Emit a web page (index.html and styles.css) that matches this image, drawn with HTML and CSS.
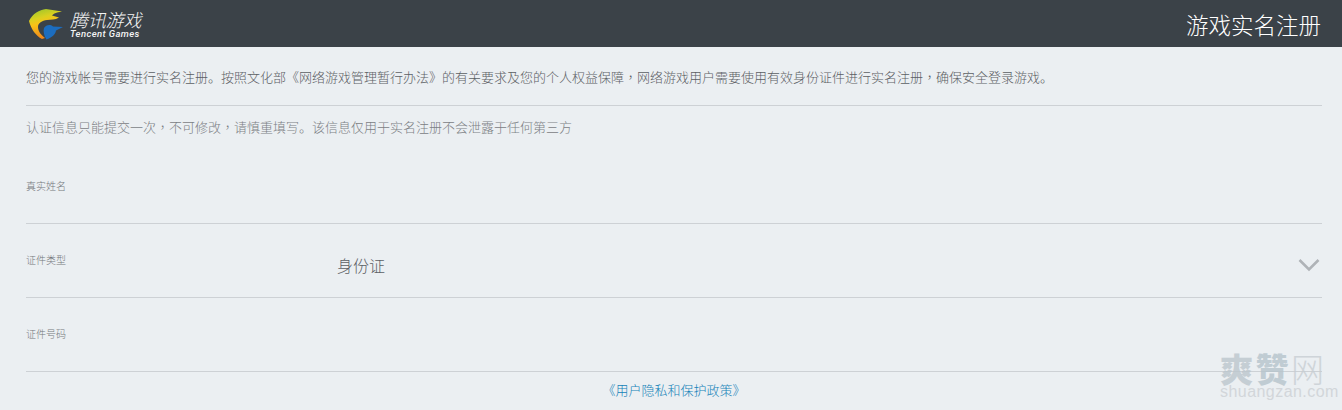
FILE: index.html
```html
<!DOCTYPE html>
<html lang="zh-CN">
<head>
<meta charset="utf-8">
<title>游戏实名注册</title>
<link rel="stylesheet" href="styles.css">
</head>
<body>
<header class="topbar">
  <div class="brand">
    <svg class="brand-mark" width="36" height="34" viewBox="28 8 36 34" aria-hidden="true">
      <defs>
        <linearGradient id="swoosh" x1="0.2" y1="0" x2="0.5" y2="1">
          <stop offset="0" stop-color="#9cc52c"/>
          <stop offset=".3" stop-color="#d9d020"/>
          <stop offset=".48" stop-color="#f8c218"/>
          <stop offset="1" stop-color="#ee7f1c"/>
        </linearGradient>
      </defs>
      <path d="M29 22 C33 14 39 11 46 10 L62 12.5 C56 13.5 53 15 52 16.5 L59 18.5 C55 21 51 20.5 47 21 C42 21.5 38 24 38 28 C38 32 41 36 45 39 L42 40 C36 37 31 30 29 22Z" fill="url(#swoosh)"/>
      <path d="M44 29 C46 26 50 25 53 27.5 L63 28 L56 31.5 C55.5 35.5 52 38.5 46.5 40.5 C44 37 43 32 44 29Z" fill="#1c6dbf"/>
    </svg>
    <div class="brand-text">
      <span class="brand-cn">腾讯游戏</span>
      <span class="brand-en">Tencent Games</span>
    </div>
  </div>
  <h1 class="page-title">游戏实名注册</h1>
</header>
<main class="content">
  <p class="intro">您的游戏帐号需要进行实名注册。按照文化部《网络游戏管理暂行办法》的有关要求及您的个人权益保障<span class="comma" lang="zh-TW">，</span>网络游戏用户需要使用有效身份证件进行实名注册<span class="comma" lang="zh-TW">，</span>确保安全登录游戏。</p>
  <p class="notice">认证信息只能提交一次<span class="comma" lang="zh-TW">，</span>不可修改<span class="comma" lang="zh-TW">，</span>请慎重填写。该信息仅用于实名注册不会泄露于任何第三方</p>
  <form class="form">
    <div class="field field-first"><span class="field-label">真实姓名</span></div>
    <div class="field"><span class="field-label">证件类型</span><span class="field-value">身份证</span>
      <svg class="chevron" width="22" height="14" viewBox="0 0 22 14" aria-hidden="true"><path d="M1.5 2 L11 11.5 L20.5 2" fill="none" stroke="#afb3b7" stroke-width="2.6"/></svg>
    </div>
    <div class="field"><span class="field-label">证件号码</span></div>
  </form>
  <a class="policy" href="#">《用户隐私和保护政策》</a>
</main>
<div class="watermark">
  <div class="wm-cn"><span class="wm-a">爽</span><span class="wm-b">赞</span><span class="wm-c">网</span></div>
  <div class="wm-en">shuangzan.com</div>
</div>
</body>
</html>
```
FILE: styles.css
```css
* { box-sizing: border-box; }
html, body { margin: 0; height: 410px; overflow: hidden; }
body {
  position: relative;
  background: #ebeff2;
  font-family: "Noto Sans CJK SC", "Liberation Sans", sans-serif;
  color: #5c6064;
}
.topbar {
  height: 47px;
  background: #3b4248;
  display: flex;
  align-items: center;
  justify-content: space-between;
  padding: 0 21px 0 28px;
}
.brand { display: flex; align-items: center; gap: 6px; }
.brand-mark { display: block; }
.brand-text { display: flex; flex-direction: column; color: #f4f4f4; font-style: italic; }
.brand-cn { font-size: 18px; line-height: 20px; letter-spacing: -.2px; font-weight: 300; }
.brand-en { font-family: Roboto, "Liberation Sans", sans-serif; font-size: 9.5px; line-height: 9px; font-weight: 500; letter-spacing: .4px; }
.page-title { margin: 0; font-size: 22.5px; line-height: 28px; font-weight: 300; color: #fff; }
.content { padding: 0 20px 0 26px; }
.intro {
  margin: 0;
  height: 59px;
  padding-top: 20px;
  font-size: 13px;
  line-height: 20px;
  font-weight: 300;
  border-bottom: 1px solid #cdd1d5;
}
.notice { margin: 0; padding-top: 11px; height: 63px; font-size: 13px; line-height: 20px; font-weight: 300; color: #7c8084; }
.comma { font-family: "Noto Sans CJK TC", sans-serif; }
.field { display: flex; align-items: flex-start; height: 74px; padding-top: 29px; border-bottom: 1px solid #cdd1d5; }
.field-first { height: 55px; padding-top: 10px; }
.field-label { width: 311px; font-size: 10px; line-height: 14px; font-weight: 300; color: #74787c; }
.field-value { font-size: 16px; line-height: 24px; font-weight: 300; color: #5c6064; }
.chevron { margin-left: auto; margin-right: 2px; margin-top: 5px; }
.policy { display: block; text-align: center; margin-top: 9px; font-size: 13px; line-height: 18px; font-weight: 300; color: #1482b8; text-decoration: none; }
.watermark { position: absolute; left: 1220px; top: 351px; width: 104px; opacity: .8; }
.wm-cn { display: flex; justify-content: space-between; height: 34px; font-size: 33px; line-height: 35px; font-weight: 900; }
.wm-a { color: #bcc6cd; }
.wm-b { color: #b6c4cc; }
.wm-c { color: #c8ced3; font-weight: 200; }
.wm-en { font-family: "Liberation Sans", sans-serif; font-size: 16px; line-height: 14px; color: #cdd1d5; letter-spacing: .45px; }
```
